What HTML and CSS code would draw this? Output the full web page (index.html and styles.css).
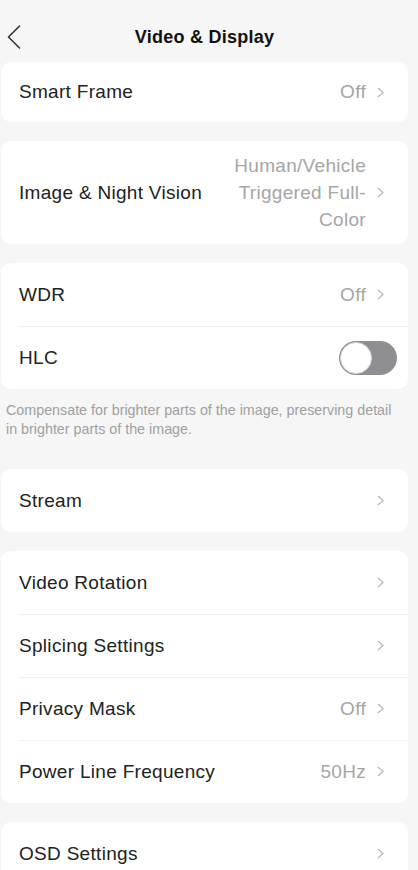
FILE: index.html
```html
<!DOCTYPE html>
<html lang="en">
<head>
<meta charset="utf-8">
<title>Video &amp; Display</title>
<link rel="stylesheet" href="styles.css">
</head>
<body>
<div class="page">
  <header class="topbar">
    <svg class="back" width="14" height="24" viewBox="0 0 14 24"><path d="M12.5 1 L1.5 12 L12.5 23" fill="none" stroke="#333" stroke-width="1.6" stroke-linecap="round" stroke-linejoin="round"/></svg>
    <h1 class="title">Video &amp; Display</h1>
  </header>

  <section class="card">
    <div class="row first-row">
      <span class="label">Smart Frame</span>
      <span class="value">Off</span>
      <svg class="chev" width="7" height="11" viewBox="0 0 7 11"><path d="M1 1 L6 5.5 L1 10" fill="none" stroke="#b5b5b5" stroke-width="1.2"/></svg>
    </div>
  </section>

  <section class="card">
    <div class="row tall">
      <span class="label">Image &amp; Night Vision</span>
      <span class="value multi">Human/Vehicle Triggered Full-Color</span>
      <svg class="chev" width="7" height="11" viewBox="0 0 7 11"><path d="M1 1 L6 5.5 L1 10" fill="none" stroke="#b5b5b5" stroke-width="1.2"/></svg>
    </div>
  </section>

  <section class="card">
    <div class="row">
      <span class="label">WDR</span>
      <span class="value">Off</span>
      <svg class="chev" width="7" height="11" viewBox="0 0 7 11"><path d="M1 1 L6 5.5 L1 10" fill="none" stroke="#b5b5b5" stroke-width="1.2"/></svg>
    </div>
    <div class="row toggle-row">
      <span class="label">HLC</span>
      <span class="toggle"><span class="knob"></span></span>
    </div>
  </section>
  <p class="note">Compensate for brighter parts of the image, preserving detail in brighter parts of the image.</p>

  <section class="card">
    <div class="row">
      <span class="label">Stream</span>
      <svg class="chev" width="7" height="11" viewBox="0 0 7 11"><path d="M1 1 L6 5.5 L1 10" fill="none" stroke="#b5b5b5" stroke-width="1.2"/></svg>
    </div>
  </section>

  <section class="card">
    <div class="row">
      <span class="label">Video Rotation</span>
      <svg class="chev" width="7" height="11" viewBox="0 0 7 11"><path d="M1 1 L6 5.5 L1 10" fill="none" stroke="#b5b5b5" stroke-width="1.2"/></svg>
    </div>
    <div class="row">
      <span class="label">Splicing Settings</span>
      <svg class="chev" width="7" height="11" viewBox="0 0 7 11"><path d="M1 1 L6 5.5 L1 10" fill="none" stroke="#b5b5b5" stroke-width="1.2"/></svg>
    </div>
    <div class="row">
      <span class="label">Privacy Mask</span>
      <span class="value">Off</span>
      <svg class="chev" width="7" height="11" viewBox="0 0 7 11"><path d="M1 1 L6 5.5 L1 10" fill="none" stroke="#b5b5b5" stroke-width="1.2"/></svg>
    </div>
    <div class="row">
      <span class="label">Power Line Frequency</span>
      <span class="value">50Hz</span>
      <svg class="chev" width="7" height="11" viewBox="0 0 7 11"><path d="M1 1 L6 5.5 L1 10" fill="none" stroke="#b5b5b5" stroke-width="1.2"/></svg>
    </div>
  </section>

  <section class="card">
    <div class="row">
      <span class="label">OSD Settings</span>
      <svg class="chev" width="7" height="11" viewBox="0 0 7 11"><path d="M1 1 L6 5.5 L1 10" fill="none" stroke="#b5b5b5" stroke-width="1.2"/></svg>
    </div>
  </section>
</div>
</body>
</html>
```
FILE: styles.css
```css
* { box-sizing: border-box; }
html, body {
  margin: 0;
  padding: 0;
  background: #f6f6f6;
}
body {
  font-family: "Liberation Sans", Arial, sans-serif;
  color: #222;
  overflow: hidden;
}
.page {
  width: 418px;
  height: 870px;
  padding: 0 10px 0 1px;
  display: flex;
  flex-direction: column;
}
.topbar {
  height: 62px;
  flex: none;
  display: flex;
  align-items: center;
  position: relative;
  padding-top: 12px;
}
.back {
  margin-left: 6px;
  flex: none;
}
.title {
  position: absolute;
  left: 0;
  right: 0;
  top: 25px;
  margin: 0;
  text-align: center;
  font-size: 18px;
  letter-spacing: 0.25px;
  font-weight: 700;
  color: #111;
  line-height: 24px;
  pointer-events: none;
}
.card {
  background: #fff;
  border-radius: 10px;
  margin-bottom: 19px;
  flex: none;
}
.row {
  height: 63px;
  display: flex;
  align-items: center;
  padding: 0 24px 0 18px;
  position: relative;
}
.row + .row::before {
  content: "";
  position: absolute;
  left: 18px;
  right: 0;
  top: 0;
  height: 1px;
  background: #efefef;
}
.first-row { height: 60px; }
.tall {
  height: 103px;
}
.label {
  font-size: 19px;
  letter-spacing: 0.3px;
  flex: 1;
  white-space: nowrap;
}
.value {
  font-size: 19px;
  letter-spacing: 0.3px;
  color: #a6a6a6;
  margin-right: 11px;
  white-space: nowrap;
}
.value.multi {
  white-space: normal;
  width: 142px;
  text-align: right;
  line-height: 27px;
}
.chev { flex: none; }
.toggle-row { padding-right: 11px; }
.toggle {
  width: 58px;
  height: 34px;
  border-radius: 17px;
  background: #8e8e93;
  position: relative;
  flex: none;
}
.knob {
  position: absolute;
  left: 1px;
  top: 1px;
  width: 32px;
  height: 32px;
  border-radius: 50%;
  background: #fff;
  border: 1px solid #d5d5d8;
}
.note {
  margin: -7px 10px 30px 5px;
  font-size: 14.3px;
  line-height: 19px;
  color: #a0a0a0;
}
```
